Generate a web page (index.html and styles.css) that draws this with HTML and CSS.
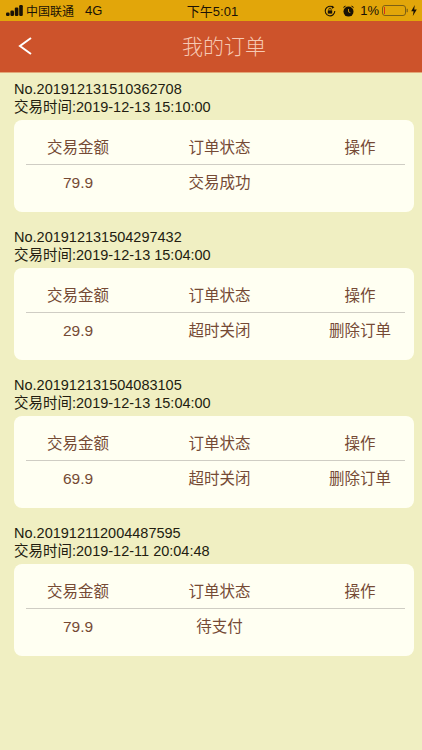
FILE: index.html
```html
<!DOCTYPE html>
<html lang="zh-CN">
<head>
<meta charset="utf-8">
<title>我的订单</title>
<link rel="stylesheet" href="styles.css">
</head>
<body>
<div class="status">
  <div class="st-left">
    <svg class="signal" width="17" height="11" viewBox="0 0 17 11"><rect x="0" y="7.5" width="3.6" height="3.5" rx="1.2"/><rect x="4.4" y="5.5" width="3.6" height="5.5" rx="1.2"/><rect x="8.8" y="2.5" width="3.6" height="8.5" rx="1.2"/><rect x="13.2" y="0" width="3.6" height="11" rx="1.2"/></svg>
    <span class="carrier">中国联通</span><span class="net">4G</span>
  </div>
  <div class="st-time">下午5:01</div>
  <div class="st-right">
    <svg class="lock" width="12" height="12" viewBox="0 0 12 12"><path d="M10.8 6A4.8 4.8 0 1 1 8.6 2" fill="none" stroke="#1a1206" stroke-width="1.1"/><path d="M7.8 0.6 10.4 2.2 8 3.8Z" fill="#1a1206"/><rect x="3.8" y="5.4" width="4.4" height="3.2" fill="#1a1206"/><path d="M4.8 5.4V4.4a1.2 1.2 0 0 1 2.4 0v1" fill="none" stroke="#1a1206" stroke-width=".8"/></svg>
    <svg class="alarm" width="11" height="12" viewBox="0 0 11 12"><circle cx="5.5" cy="6.6" r="5" fill="#1a1206"/><path d="M0.4 3.2A2.2 2.2 0 0 1 3.2 0.8Z" fill="#1a1206"/><path d="M10.6 3.2A2.2 2.2 0 0 0 7.8 0.8Z" fill="#1a1206"/><path d="M5.5 4v2.8l1.8 .8" fill="none" stroke="#e2a60a" stroke-width=".9"/></svg>
    <span class="pct">1%</span>
    <svg class="batt" width="26" height="11" viewBox="0 0 26 11"><rect x=".5" y=".5" width="23" height="10" rx="2.5" fill="none" stroke="#7d6014"/><rect x="2" y="2" width="1" height="7" fill="#d8321c"/><rect x="24.6" y="3.8" width="1.2" height="3.4" fill="#7d6014"/></svg>
    <svg class="bolt" width="6" height="11" viewBox="0 0 6 11"><path d="M3.8 0 0.2 6.2H2.6L1.8 11 5.8 4.4H3.2Z" fill="#1a1206"/></svg>
  </div>
</div>
<header class="nav">
  <svg class="back" width="14" height="18" viewBox="0 0 14 18"><path d="M13 1 2 9l11 8" fill="none" stroke="#fff" stroke-width="2"/></svg>
  <h1 class="title">我的订单</h1>
</header>
<main class="list">
  <section class="order">
    <div class="meta"><div>No.201912131510362708</div><div>交易时间:2019-12-13 15:10:00</div></div>
    <div class="card">
      <div class="row head"><span>交易金额</span><span>订单状态</span><span>操作</span></div>
      <div class="row body"><span>79.9</span><span>交易成功</span><span></span></div>
    </div>
  </section>
  <section class="order">
    <div class="meta"><div>No.201912131504297432</div><div>交易时间:2019-12-13 15:04:00</div></div>
    <div class="card">
      <div class="row head"><span>交易金额</span><span>订单状态</span><span>操作</span></div>
      <div class="row body"><span>29.9</span><span>超时关闭</span><span>删除订单</span></div>
    </div>
  </section>
  <section class="order">
    <div class="meta"><div>No.201912131504083105</div><div>交易时间:2019-12-13 15:04:00</div></div>
    <div class="card">
      <div class="row head"><span>交易金额</span><span>订单状态</span><span>操作</span></div>
      <div class="row body"><span>69.9</span><span>超时关闭</span><span>删除订单</span></div>
    </div>
  </section>
  <section class="order">
    <div class="meta"><div>No.201912112004487595</div><div>交易时间:2019-12-11 20:04:48</div></div>
    <div class="card">
      <div class="row head"><span>交易金额</span><span>订单状态</span><span>操作</span></div>
      <div class="row body"><span>79.9</span><span>待支付</span><span></span></div>
    </div>
  </section>
</main>
</body>
</html>
```
FILE: styles.css
```css
* { box-sizing: border-box; }
html, body { margin: 0; height: 100%; }
body {
  width: 422px;
  height: 750px;
  overflow: hidden;
  background: #f0efc2;
  font-family: "Liberation Sans", "Noto Sans CJK SC", sans-serif;
}
.status {
  height: 21px;
  background: #e2a60a;
  color: #1a1206;
  display: grid;
  grid-template-columns: 1fr auto 1fr;
  align-items: center;
  padding: 0 5px 0 6px;
  font-size: 12px;
}
.st-left { display: flex; align-items: center; }
.signal { fill: #1a1206; margin-right: 3px; }
.net { margin-left: 11px; font-size: 13px; }
.st-time { font-size: 13px; padding-left: 2px; }
.st-right { display: flex; align-items: center; justify-content: flex-end; }
.alarm { margin-left: 7px; }
.pct { margin-left: 6px; font-size: 13px; }
.batt { margin-left: 3px; }
.bolt { margin-left: 3px; }
.nav {
  height: 52px;
  background: #cd532b;
  display: flex;
  align-items: center;
  justify-content: center;
  position: relative;
  padding-bottom: 4px;
  border-bottom: 1px solid #e3a878;
}
.back { position: absolute; left: 18px; top: 16px; }
.title {
  margin: 0 0 0 26px;
  font-size: 21px;
  font-weight: 200;
  color: #f6c9b4;
  font-family: "Noto Sans CJK SC", sans-serif;
}
.list { padding: 0 8px 0 14px; }
.order { height: 148px; padding-top: 7px; }
.meta {
  font-size: 14.5px;
  line-height: 18px;
  color: #221c10;
  height: 40px;
}
.card {
  background: #fffff2;
  border-radius: 8px;
  height: 92px;
  padding: 10px 9px 0 12px;
}
.row { display: grid; grid-template-columns: 104px 179px 1fr; text-align: center; font-size: 15.5px; color: #754a35; }
.row span:last-child { padding-left: 6px; }
.head { height: 35px; line-height: 36px; border-bottom: 1px solid #cfcdc4; }
.body { line-height: 36px; }
```
